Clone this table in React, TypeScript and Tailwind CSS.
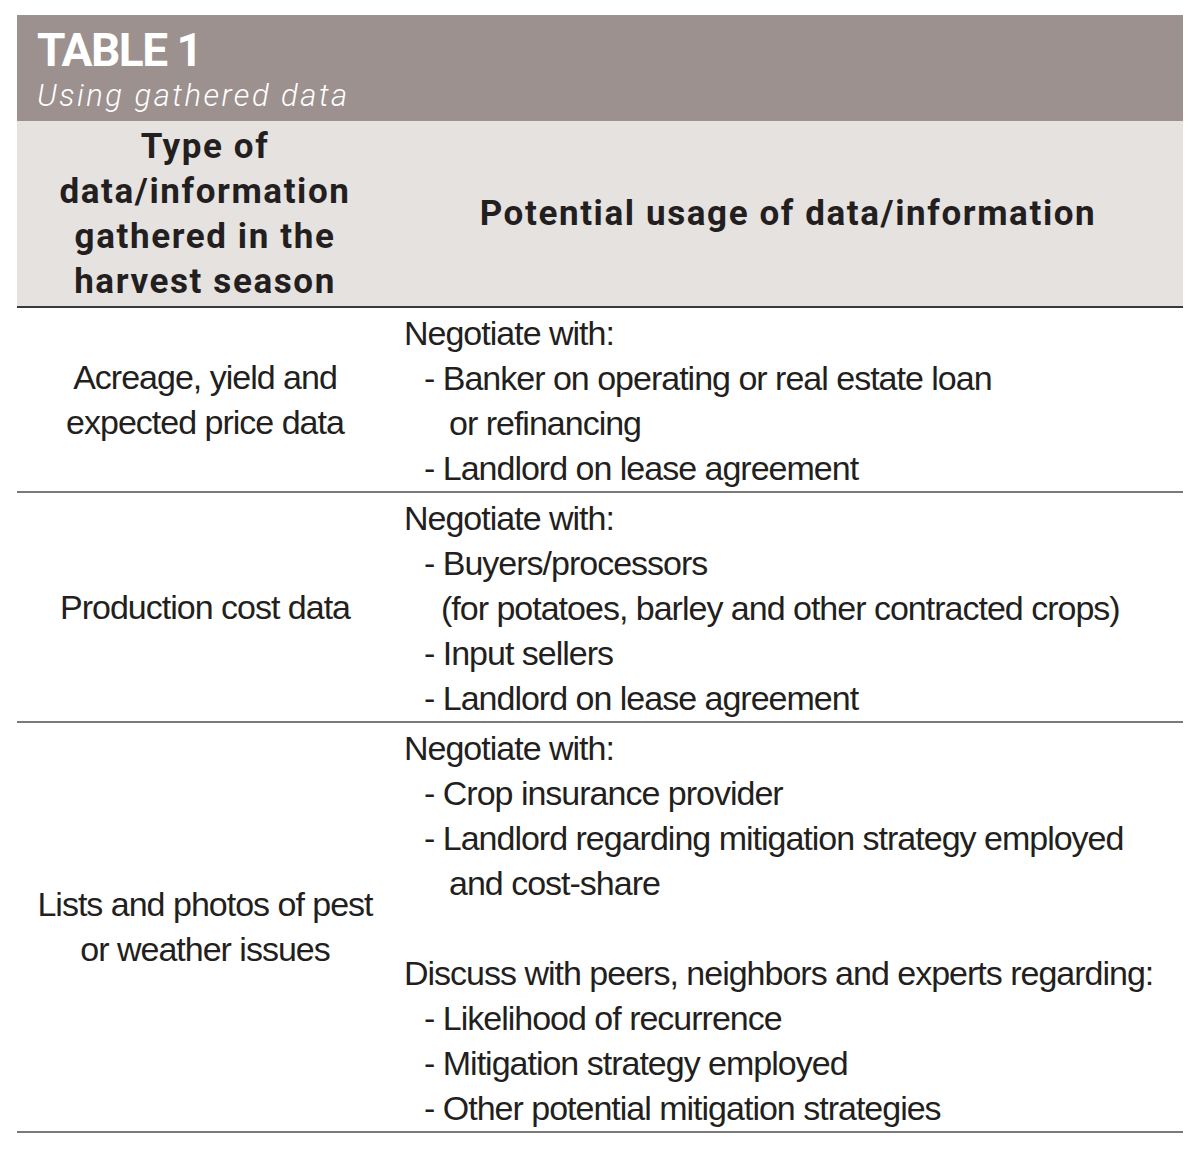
const body = '"Liberation Sans", Arial, sans-serif';
const head = 'Roboto, "Open Sans", sans-serif';

type Row = {
  label: string[];
  lines: { text: string; indent?: 0 | 1 | 2 | 3 }[];
};

const rows: Row[] = [
  {
    label: ["Acreage, yield and", "expected price data"],
    lines: [
      { text: "Negotiate with:" },
      { text: "- Banker on operating or real estate loan", indent: 1 },
      { text: "or refinancing", indent: 2 },
      { text: "- Landlord on lease agreement", indent: 1 },
    ],
  },
  {
    label: ["Production cost data"],
    lines: [
      { text: "Negotiate with:" },
      { text: "- Buyers/processors", indent: 1 },
      { text: "(for potatoes, barley and other contracted crops)", indent: 3 },
      { text: "- Input sellers", indent: 1 },
      { text: "- Landlord on lease agreement", indent: 1 },
    ],
  },
  {
    label: ["Lists and photos of pest", "or weather issues"],
    lines: [
      { text: "Negotiate with:" },
      { text: "- Crop insurance provider", indent: 1 },
      { text: "- Landlord regarding mitigation strategy employed", indent: 1 },
      { text: "and cost-share", indent: 2 },
      { text: "\u00a0" },
      { text: "Discuss with peers, neighbors and experts regarding:" },
      { text: "- Likelihood of recurrence", indent: 1 },
      { text: "- Mitigation strategy employed", indent: 1 },
      { text: "- Other potential mitigation strategies", indent: 1 },
    ],
  },
];

const indentClass = ["pl-0", "pl-[20px]", "pl-[45px]", "pl-[37px]"];

export default function App() {
  return (
    <div className="min-h-[1170px] w-[1200px] bg-white pt-[15px]">
      <div className="ml-[17px] w-[1166px]">
        {/* Title band */}
        <div className="h-[106px] bg-[#9c918e] px-[20px] pt-[10px] text-white" style={{ fontFamily: head }}>
          <div className="text-[46px] font-bold leading-[50px] tracking-[-1.5px]">TABLE 1</div>
          <div className="mt-[2px] text-[31px] font-light italic leading-[38px] tracking-[2.5px]">
            Using gathered data
          </div>
        </div>

        {/* Column headers */}
        <div
          className="grid grid-cols-[376px_1fr] border-b-2 border-[#3a3a3a] bg-[#e6e2e0] text-[#231f20]"
          style={{ fontFamily: head }}
        >
          <div className="flex h-[185px] flex-col items-center justify-center text-center text-[35px] font-bold leading-[45px] tracking-[1.6px]">
            <span>Type of</span>
            <span>data/information</span>
            <span>gathered in the</span>
            <span>harvest season</span>
          </div>
          <div className="flex items-center justify-center text-[35px] font-bold leading-[45px] tracking-[1.6px]">
            Potential usage of data/information
          </div>
        </div>

        {/* Body rows */}
        {rows.map((row, i) => (
          <div
            key={i}
            className="grid grid-cols-[376px_1fr] border-b-2 border-[#7a7a7a] text-[#231f20]"
            style={{ fontFamily: body }}
          >
            <div className="flex flex-col items-center justify-center text-center text-[34px] leading-[45px] tracking-[-1px]">
              {row.label.map((l) => (
                <span key={l} className="whitespace-nowrap">
                  {l}
                </span>
              ))}
            </div>
            <div className="pl-[11px] pt-[3px] text-[34px] leading-[45px] tracking-[-1px]">
              {row.lines.map((ln, j) => (
                <div key={j} className={`whitespace-nowrap ${indentClass[ln.indent ?? 0]}`}>
                  {ln.text}
                </div>
              ))}
            </div>
          </div>
        ))}
      </div>
    </div>
  );
}
